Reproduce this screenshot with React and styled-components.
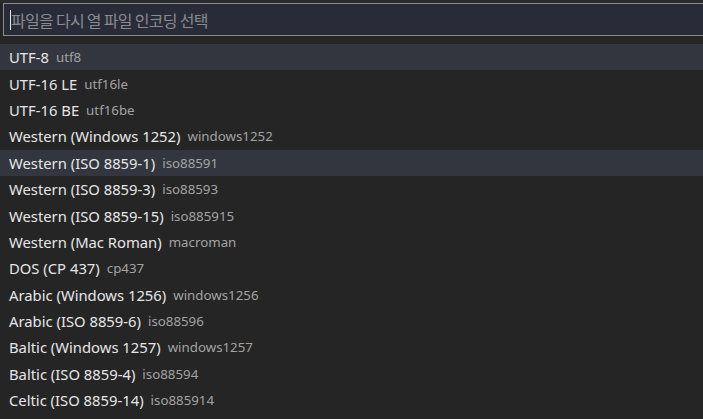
import styled, { createGlobalStyle } from "styled-components";

const GlobalStyle = createGlobalStyle`
  html, body {
    margin: 0;
    padding: 0;
    background: #252526;
    overflow: hidden;
  }
`;

const Picker = styled.div`
  width: 703px;
  height: 419px;
  background: #252526;
  font-family: "Noto Sans", "Noto Sans CJK KR", sans-serif;
  overflow: hidden;
`;

const InputArea = styled.div`
  padding: 3px 0 8px 3px;
  background: linear-gradient(#2b2b2b 0 3px, #252526 3px);
`;

const InputBox = styled.div`
  display: flex;
  align-items: center;
  box-sizing: border-box;
  width: 720px;
  height: 33px;
  padding-left: 6px;
  background: #292c38;
  border: 1px solid #8b8b8e;
`;

const Caret = styled.span`
  width: 1px;
  height: 20px;
  background: #e8e8e8;
`;

const Placeholder = styled.span`
  font-family: "Noto Sans CJK KR", "Noto Sans", sans-serif;
  font-size: 16px;
  color: #8a8b90;
  letter-spacing: -0.7px;
`;

const List = styled.ul`
  list-style: none;
  margin: 0;
  padding: 0;
`;

const Row = styled.li`
  display: flex;
  align-items: center;
  height: 26.4px;
  padding-left: 9px;
  background: ${({ $active }) => ($active ? "#33363e" : "transparent")};
`;

const Label = styled.span`
  font-size: 14.8px;
  color: #e6e6e6;
`;

const Desc = styled.span`
  margin-left: 7px;
  font-size: 13.3px;
  color: #a3a3a3;
`;

const encodings = [
  ["UTF-8", "utf8", true],
  ["UTF-16 LE", "utf16le"],
  ["UTF-16 BE", "utf16be"],
  ["Western (Windows 1252)", "windows1252"],
  ["Western (ISO 8859-1)", "iso88591", true],
  ["Western (ISO 8859-3)", "iso88593"],
  ["Western (ISO 8859-15)", "iso885915"],
  ["Western (Mac Roman)", "macroman"],
  ["DOS (CP 437)", "cp437"],
  ["Arabic (Windows 1256)", "windows1256"],
  ["Arabic (ISO 8859-6)", "iso88596"],
  ["Baltic (Windows 1257)", "windows1257"],
  ["Baltic (ISO 8859-4)", "iso88594"],
  ["Celtic (ISO 8859-14)", "iso885914"],
];

export default function App() {
  return (
    <Picker>
      <GlobalStyle />
      <InputArea>
        <InputBox>
          <Caret />
          <Placeholder>파일을 다시 열 파일 인코딩 선택</Placeholder>
        </InputBox>
      </InputArea>
      <List>
        {encodings.map(([label, desc, active]) => (
          <Row key={desc} $active={active}>
            <Label>{label}</Label>
            <Desc>{desc}</Desc>
          </Row>
        ))}
      </List>
    </Picker>
  );
}
